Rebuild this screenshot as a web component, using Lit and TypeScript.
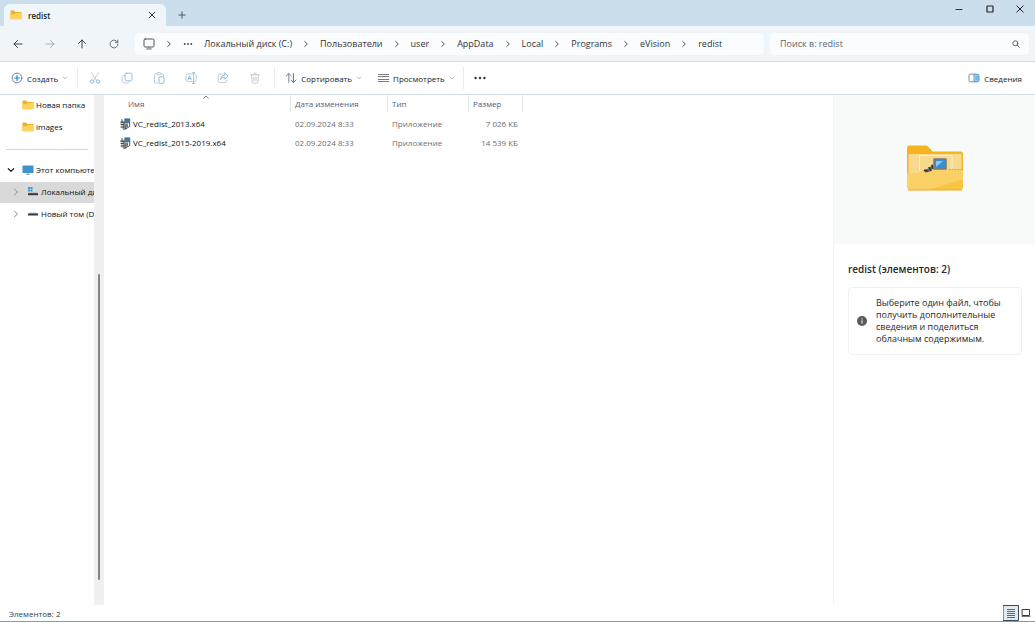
import { LitElement, html, css, svg, nothing } from "lit";
import { customElement, property } from "lit/decorators.js";
import { classMap } from "lit/directives/class-map.js";

const s = (w: number, h: number, body: unknown) => html`<svg width=${w} height=${h} viewBox="0 0 ${w} ${h}" fill="none" stroke-linecap="round" stroke-linejoin="round" aria-hidden="true">${body}</svg>`;

const BLUE = "#8dbfe3";
const PALE = "#c3cbd2";

const icons: Record<string, unknown> = {
  folder: s(12, 10, svg`<path d="M.5 1.2Q.5.5 1.2.5H4l1.3 1.4H10.600q.9 0 .9.8V9H.5z" fill="#f2b01e"/><path d="M.5 4.200h4L5.600 3H11.500V8.600q0 .9-.9.9H1.400q-.9 0-.9-.9z" fill="#ffd45e"/>`),
  close: s(8, 8, svg`<path d="M1.200 1.200l5.600 5.600M6.800 1.200L1.200 6.800" stroke="#333"/>`),
  closeLarge: s(8, 8, svg`<path d="M.8.8l6.400 6.400M7.200.8L.8 7.200" stroke="#222"/>`),
  plus: s(8, 8, svg`<path d="M4 .8v6.400M.8 4h6.400" stroke="#555"/>`),
  minimize: s(8, 8, svg`<path d="M1 4.500h6" stroke="#333"/>`),
  maximize: s(8, 8, svg`<rect x="1" y="1" width="6" height="6" rx=".6" stroke="#222" stroke-width="1.200"/>`),
  back: s(10, 10, svg`<path d="M9 5H1M4.500 1.500L1 5l3.500 3.500" stroke="#3d4145"/>`),
  forward: s(10, 10, svg`<path d="M1 5h8M5.500 1.500L9 5 5.500 8.500" stroke="#a9afb4"/>`),
  up: s(10, 10, svg`<path d="M5 9V1M1.500 4.500L5 1l3.500 3.500" stroke="#3d4145"/>`),
  refresh: s(10, 10, svg`<path d="M8.900 5A3.900 3.900 0 1 1 7.600 2.100L8.700 3.200M8.800 1v2.400H6.400" stroke="#5d6267" stroke-width=".9"/>`),
  monitor: s(12, 12, svg`<rect x="1" y="1" width="10" height="8" rx="1.200" stroke="#50555a"/><path d="M5 9.500v1.300M7 9.500v1.300M3.500 11h5" stroke="#6b7075" stroke-width=".8"/>`),
  chevron: s(6, 8, svg`<path d="M1.700 1.500L4.300 4 1.700 6.500" stroke="#4e5358"/>`),
  chevronPale: s(6, 8, svg`<path d="M1.500 1.200L4.500 4 1.500 6.800" stroke="#8a8a8a"/>`),
  chevronDown: s(8, 6, svg`<path d="M1.300 1.700L4 4.300l2.700-2.600" stroke="#222" stroke-width="1.200"/>`),
  caret: s(6, 4, svg`<path d="M1.200 1L3 2.800 4.800 1" stroke="#9ba1a6" stroke-width=".8"/>`),
  sortUp: s(6, 4, svg`<path d="M.7 3.200L3 1l2.300 2.200" stroke="#777" stroke-width=".9"/>`),
  dots: s(10, 4, svg`<g fill="#3d4145"><circle cx="1.700" cy="2" r=".9"/><circle cx="5" cy="2" r=".9"/><circle cx="8.300" cy="2" r=".9"/></g>`),
  dotsBold: s(12, 4, svg`<g fill="#333"><circle cx="1.600" cy="2" r="1.200"/><circle cx="6" cy="2" r="1.200"/><circle cx="10.400" cy="2" r="1.200"/></g>`),
  search: s(8, 8, svg`<circle cx="3.300" cy="3.300" r="2.500" stroke="#555b60" stroke-width=".9"/><path d="M5.200 5.200l2.200 2.200" stroke="#555b60"/>`),
  create: s(12, 12, svg`<circle cx="6" cy="6" r="4.900" stroke="#68727a" stroke-width=".9"/><path d="M6 3.600v4.800M3.600 6h4.800" stroke="#1c86cf" stroke-width="1.200"/>`),
  cut: s(12, 12, svg`<path d="M2.500.8L7.400 8.300M9.500.8L4.600 8.300" stroke="${PALE}"/><circle cx="3" cy="9.500" r="1.700" stroke="${BLUE}"/><circle cx="9" cy="9.500" r="1.700" stroke="${BLUE}"/>`),
  copy: s(12, 12, svg`<path d="M3.500 3.200H2.500q-1.400 0-1.400 1.400V9q0 2 2 2h3.500q1 0 1.400-.8" stroke="${PALE}"/><rect x="4" y="1.200" width="7" height="7.600" rx="1.600" stroke="${BLUE}"/>`),
  paste: s(12, 12, svg`<path d="M4 1.800H2.500q-1 0-1 1V10q0 1.200 1 1.200H5M8 1.800h1.500q1 0 1 1V4" stroke="${PALE}"/><rect x="4" y=".7" width="4" height="2" rx="1" stroke="${PALE}"/><rect x="6" y="4.800" width="5" height="6.500" rx=".9" stroke="${BLUE}"/>`),
  rename: s(12, 12, svg`<path d="M7.500 2H2.500Q1 2 1 3.500v4Q1 9.500 2.500 9.500h5M10 2q1.300.2 1.300 1.500v4q0 1.700-1.300 2" stroke="${PALE}"/><path d="M3 7.800L4.600 3.700 6.200 7.800M3.500 6.500h2.200M8.700 1v10M7.600.7h2.200M7.600 11.300h2.200" stroke="${BLUE}"/>`),
  share: s(12, 12, svg`<path d="M5 2H2.800Q1.200 2 1.200 3.500V9q0 1.600 1.600 1.600h5.400Q9.800 10.600 9.800 9V8" stroke="${PALE}"/><path d="M7.700 1l3.500 3.100-3.500 3V5.200Q5 5.200 3.600 7.500 4 3.400 7.700 2.900z" stroke="${BLUE}"/>`),
  trash: s(12, 12, svg`<path d="M1.500 2.800h9M4.500 2.600Q4.500 1 6 1t1.500 1.600M2.500 3l.7 7.200q.1 1 1.100 1h3.400q1 0 1.100-1L9.500 3M5 5.200v3.600M7 5.200v3.600" stroke="${PALE}"/>`),
  sort: s(12, 12, svg`<path d="M3.800 10.500V1.500M1.200 4l2.600-2.500L6.400 4" stroke="#7b848c"/><path d="M8.400 1.500v9M5.900 8l2.500 2.500L10.900 8" stroke="#1c86cf"/>`),
  view: s(12, 12, svg`<path d="M1 2.500h11M1 4.500h11M1 7.500h11M1 9.500h11" stroke="#747b82" stroke-linecap="butt"/>`),
  details: s(12, 10, svg`<path d="M6.500 1.200H2.500Q1 1.200 1 2.700v4.600q0 1.500 1.500 1.500h4" stroke="#777f86" stroke-width=".9"/><path d="M6.500 1.200h3q1.500 0 1.500 1.500v4.600q0 1.500-1.500 1.500h-3z" fill="#9dccea" stroke="#3d93cd" stroke-width=".9"/><path d="M8 4h1.500M8 6h1.500" stroke="#3d93cd" stroke-width=".8"/>`),
  pc: s(12, 10, svg`<rect x=".5" y=".5" width="11" height="7.500" rx=".6" fill="#3a94cc"/><path d="M4.500 9.300h3" stroke="#8a9aa8"/><path d="M6 8v1" stroke="#8a9aa8"/>`),
  driveSystem: s(12, 10, svg`<path d="M1 0h2v2H1zM3.500 0h2v2h-2zM1 2.500h2v2H1zM3.500 2.500h2v2h-2z" fill="#3198db"/><path d="M2 5.200h8l1 1.300H1z" fill="#b4b9bd"/><rect x="1" y="6.200" width="10" height="2" fill="#34393d"/>`),
  drive: s(12, 10, svg`<path d="M2.500 3.500h7L11 5H1z" fill="#c3c7ca"/><rect x="1" y="4.500" width="10" height="2" fill="#393d40"/>`),
  installer: s(11, 12, svg`<path d="M.8 3.500L3.500 2.500 8 4.500V8.500L4 11.500.8 10z" fill="#c3c7ca"/><path d="M2 1.500v3M.6 4.200h3.600M1 6.500h2.500M1 9h3M4 4.500v7M5.800 6.500v4.500M5 11.200L9.700 8.500V5" stroke="#3a3f44" stroke-width=".9"/><rect x="5" y=".8" width="4.800" height="4" fill="#2a80b7" stroke="#4b4f53" stroke-width=".6"/><path d="M7.200 6.500v2" stroke="#34383b" stroke-width=".9"/>`),
  info: s(10, 10, svg`<circle cx="5" cy="5" r="5" fill="#5a5a5a"/><path d="M5 4.700v2.500" stroke="#fff"/><circle cx="5" cy="2.900" r=".6" fill="#fff"/>`),
  listMode: s(16, 16, svg`<rect x=".5" y=".5" width="15" height="15" fill="#dfeaf1" stroke="#3f4a54"/><path d="M4 4.500h8M4 6.500h8M4 8.500h8M4 10.500h8M4 12.500h8" stroke="#666" stroke-linecap="butt"/>`),
  iconMode: s(10, 10, svg`<rect x="1.500" y="1.500" width="7" height="6" fill="#fff" stroke="#3b3b3b"/><path d="M1 8.500h8" stroke="#777"/>`),
  bigFolder: s(58, 46, svg`<path d="M1 3q0-2.500 2.500-2.500H20q1 0 1.800.8L26.500 6.500H54.500Q57 6.500 57 9V40H1z" fill="#f6b322"/><path d="M2.500 10q0-1 1-1h51q1 0 1 1v20h-53z" fill="#f8d98d"/><path d="M13.500 25V10.500H46V24" stroke="#fdf1cf"/><path d="M1 28h11l6-3.500h39V42q0 3-3 3H4q-3 0-3-3V28z" fill="#fbd064"/><path d="M22 45L57 34v8q0 3-3 3z" fill="#f9c443"/><path d="M2.500 45h53" stroke="#e9a915"/><path d="M18 24.500l5-1 4-4.500v4l-4 4-4 .5z" fill="#606a72"/><path d="M18.500 25.500l2.500.5M23 22.500l2 3M26 20.500l1 3" stroke="#25313b" stroke-width="1.500"/><rect x="28" y="14" width="12" height="10" fill="#3590d2" stroke="#7e7480" stroke-width="1.500"/><path d="M30 16h7l-7 6z" fill="#8ec7ed"/><path d="M43 24.500h13" stroke="#c0a578" stroke-dasharray="1 2"/>`),
};

const font = css`
  :host { font-family: "Open Sans", "Noto Sans", sans-serif; }
  * { box-sizing: border-box; }
  svg { display: block; flex: none; }
  button { font: inherit; color: inherit; background: none; border: 0; padding: 0; display: flex; align-items: center; justify-content: center; cursor: default; }
  a { color: inherit; text-decoration: none; }
`;

@customElement("title-bar")
class TitleBar extends LitElement {
  static styles = [font, css`
    :host { display: flex; height: 26px; background: #cbdeeb; flex: none; }
    .tab { display: flex; align-items: center; width: 162px; margin: 4px 0 0 4px; padding: 0 10px 0 6px; background: #eff5f9; border-radius: 6px 6px 0 0; font-size: 8px; font-weight: 600; color: #1c1c1c; }
    .name { flex: 1; margin-left: 6px; }
    .new { width: 32px; margin-top: 4px; }
    .window { display: flex; margin-left: auto; height: 18px; }
    .window button { width: 31px; }
    .window button:last-child { width: 30px; }
  `];
  render() {
    return html`
      <div class="tab">${icons.folder}<span class="name">redist</span><button aria-label="Закрыть вкладку">${icons.close}</button></div>
      <button class="new" aria-label="Новая вкладка">${icons.plus}</button>
      <div class="window">
        <button aria-label="Свернуть">${icons.minimize}</button>
        <button aria-label="Развернуть">${icons.maximize}</button>
        <button aria-label="Закрыть">${icons.closeLarge}</button>
      </div>`;
  }
}

@customElement("address-bar")
class AddressBar extends LitElement {
  static styles = [font, css`
    :host { display: flex; align-items: center; height: 36px; padding: 0 6px 0 2px; background: #eff5f9; border-bottom: 1px solid #d3dfe7; flex: none; font-size: 9px; color: #303439; }
    .go { width: 32px; height: 22px; }
    .path { flex: 1 1 0; display: flex; align-items: center; gap: 11px; height: 22px; margin-left: 5px; padding-left: 8px; background: #fbfcfe; border-radius: 4px; min-width: 0; white-space: nowrap; }
    .search { display: flex; align-items: center; flex: 0 1 259px; height: 22px; margin-left: 6px; padding: 0 9px 0 10px; background: #fbfcfe; border-radius: 4px; }
    input { flex: 1; min-width: 0; font: inherit; border: 0; padding: 0; background: none; outline: none; }
    input::placeholder { color: #5f656a; opacity: 1; }
  `];
  render() {
    const crumbs = ["Локальный диск (C:)", "Пользователи", "user", "AppData", "Local", "Programs", "eVision", "redist"];
    return html`
      <button class="go" aria-label="Назад">${icons.back}</button>
      <button class="go" aria-label="Вперед" disabled>${icons.forward}</button>
      <button class="go" aria-label="Вверх">${icons.up}</button>
      <button class="go" aria-label="Обновить">${icons.refresh}</button>
      <nav class="path">
        ${icons.monitor}${icons.chevron}
        <button aria-label="Другие папки">${icons.dots}</button>
        ${crumbs.map((c, i) => html`${i ? icons.chevron : nothing}<a href="#">${c}</a>`)}
      </nav>
      <div class="search"><input type="search" aria-label="Поиск" placeholder="Поиск в: redist">${icons.search}</div>`;
  }
}

@customElement("command-bar")
class CommandBar extends LitElement {
  static styles = [font, css`
    :host { display: flex; align-items: center; height: 33px; padding: 0 13px 0 11px; background: #fff; border-bottom: 1px solid #d3dfe7; flex: none; font-size: 8px; color: #222; white-space: nowrap; }
    .label { gap: 4px; height: 22px; }
    .tools { display: flex; align-items: center; height: 22px; margin: 0 10px 0 9px; padding: 0 3px 0 1px; border: solid #e8ecef; border-width: 0 1px; }
    .tools button { width: 32px; height: 22px; }
    .menus { display: flex; gap: 15px; padding-right: 8px; margin-right: 10px; border-right: 1px solid #e8ecef; }
    .last { margin-left: auto; }
  `];
  render() {
    const tools = [["cut", "Вырезать"], ["copy", "Копировать"], ["paste", "Вставить"], ["rename", "Переименовать"], ["share", "Поделиться"], ["trash", "Удалить"]];
    return html`
      <button class="label">${icons.create}<span>Создать</span>${icons.caret}</button>
      <div class="tools">${tools.map(([k, l]) => html`<button aria-label=${l} disabled>${icons[k]}</button>`)}</div>
      <div class="menus">
        <button class="label">${icons.sort}<span>Сортировать</span>${icons.caret}</button>
        <button class="label">${icons.view}<span>Просмотреть</span>${icons.caret}</button>
      </div>
      <button class="label" aria-label="Еще">${icons.dotsBold}</button>
      <button class="label last">${icons.details}<span>Сведения</span></button>`;
  }
}

@customElement("tree-item")
class TreeItem extends LitElement {
  @property() icon = "folder";
  @property() label = "";
  @property() arrow = "";
  @property({ type: Boolean }) nested = false;
  @property({ type: Boolean }) selected = false;
  static styles = [font, css`
    :host { display: block; }
    .row { display: flex; align-items: center; height: 21px; padding: 0 0 2px 6px; overflow: hidden; white-space: nowrap; font-size: 8px; color: #111; }
    .nested { padding-left: 11px; }
    .selected { background: #d9d9d9; }
    .arrow { width: 9px; display: flex; justify-content: center; margin-right: 7px; flex: none; }
    .text { margin-left: 2px; }
  `];
  render() {
    return html`<div class=${classMap({ row: true, nested: this.nested, selected: this.selected })}>
      <span class="arrow">${this.arrow ? icons[this.arrow] : nothing}</span>${icons[this.icon]}<span class="text">${this.label}</span>
    </div>`;
  }
}

@customElement("file-table")
class FileTable extends LitElement {
  static styles = [font, css`
    :host { display: block; font-size: 8px; padding-left: 1px; }
    table { table-layout: fixed; border-collapse: collapse; width: 418px; }
    th, td { padding: 0; text-align: left; font-weight: 400; white-space: nowrap; }
    th { height: 19px; vertical-align: top; color: #4c607a; }
    .head { display: block; height: 17px; line-height: 18px; padding-left: 4px; border-right: 1px solid #e0e5e9; }
    .name-col { width: 186px; }
    .date-col { width: 97px; }
    .type-col { width: 81px; }
    .size-col { width: 54px; }
    .sorted { position: relative; padding-left: 23px; }
    .sorted svg { position: absolute; top: 0; left: 53%; }
    td { height: 19px; padding-left: 4px; color: #6d6d6d; }
    td:last-child { text-align: right; padding-right: 5px; }
    .file { display: flex; align-items: center; gap: 2px; padding-left: 11px; color: #111; }
  `];
  render() {
    const files = [["VC_redist_2013.x64", "7 026 КБ"], ["VC_redist_2015-2019.x64", "14 539 КБ"]];
    return html`<table>
      <thead><tr>
        <th class="name-col"><span class="head sorted">Имя${icons.sortUp}</span></th>
        <th class="date-col"><span class="head">Дата изменения</span></th>
        <th class="type-col"><span class="head">Тип</span></th>
        <th class="size-col"><span class="head">Размер</span></th>
      </tr></thead>
      <tbody>${files.map(([n, size]) => html`<tr>
        <td><span class="file">${icons.installer}<span>${n}</span></span></td>
        <td>02.09.2024 8:33</td><td>Приложение</td><td>${size}</td>
      </tr>`)}</tbody>
    </table>`;
  }
}

@customElement("details-pane")
class DetailsPane extends LitElement {
  static styles = [font, css`
    :host { display: block; border-left: 1px solid #f3f5f6; color: #26282a; }
    .preview { display: flex; align-items: center; justify-content: center; height: 149px; padding-bottom: 4px; background: #f8faf9; }
    .body { padding: 18px 13px 0 14px; }
    h2 { margin: 0 0 11px; font-size: 10px; line-height: 14px; font-weight: 600; }
    .note { display: flex; align-items: center; gap: 9px; padding: 9px 8px; border: 1px solid #f0f0f0; border-radius: 4px; }
    p { margin: 0; font-size: 9px; line-height: 12px; }
  `];
  render() {
    return html`
      <div class="preview">${icons.bigFolder}</div>
      <div class="body">
        <h2>redist (элементов: 2)</h2>
        <div class="note">${icons.info}<p>Выберите один файл, чтобы получить дополнительные сведения и поделиться облачным содержимым.</p></div>
      </div>`;
  }
}

@customElement("app-root")
class AppRoot extends LitElement {
  static styles = [font, css`
    :host { display: flex; flex-direction: column; height: 100vh; background: #fff; overflow: hidden; border-bottom: 1px solid #8f979e; box-sizing: border-box; }
    .content { flex: 1; display: grid; grid-template-columns: 94px 10px minmax(0, 1fr) 202px; min-height: 0; }
    .tree { display: flex; flex-direction: column; gap: 1px; overflow: hidden; }
    hr { width: 82px; height: 1px; margin: 10px 0 9px 6px; border: 0; background: #ccd8e0; flex: none; }
    .track { display: flex; flex-direction: column; align-items: center; background: #f0f0f0; }
    .space { flex: 179; }
    .thumb { flex: 306; width: 2px; border-radius: 1px; background: #858585; }
    .tail { flex: 25; }
    .status { display: flex; align-items: center; justify-content: space-between; height: 16px; padding: 0 4px 0 9px; font-size: 8px; color: #2b4155; flex: none; }
    .modes { display: flex; align-items: center; gap: 2px; }
  `];
  render() {
    return html`
      <title-bar></title-bar>
      <address-bar></address-bar>
      <command-bar></command-bar>
      <div class="content">
        <nav class="tree">
          <tree-item label="Новая папка"></tree-item>
          <tree-item label="images"></tree-item>
          <hr>
          <tree-item icon="pc" arrow="chevronDown" label="Этот компьютер"></tree-item>
          <tree-item icon="driveSystem" arrow="chevronPale" nested selected label="Локальный диск (C:)"></tree-item>
          <tree-item icon="drive" arrow="chevronPale" nested label="Новый том (D:)"></tree-item>
        </nav>
        <div class="track"><span class="space"></span><span class="thumb"></span><span class="tail"></span></div>
        <file-table></file-table>
        <details-pane></details-pane>
      </div>
      <footer class="status"><span>Элементов: 2</span>
        <div class="modes"><button aria-label="Таблица">${icons.listMode}</button><button aria-label="Крупные значки">${icons.iconMode}</button></div>
      </footer>`;
  }
}
